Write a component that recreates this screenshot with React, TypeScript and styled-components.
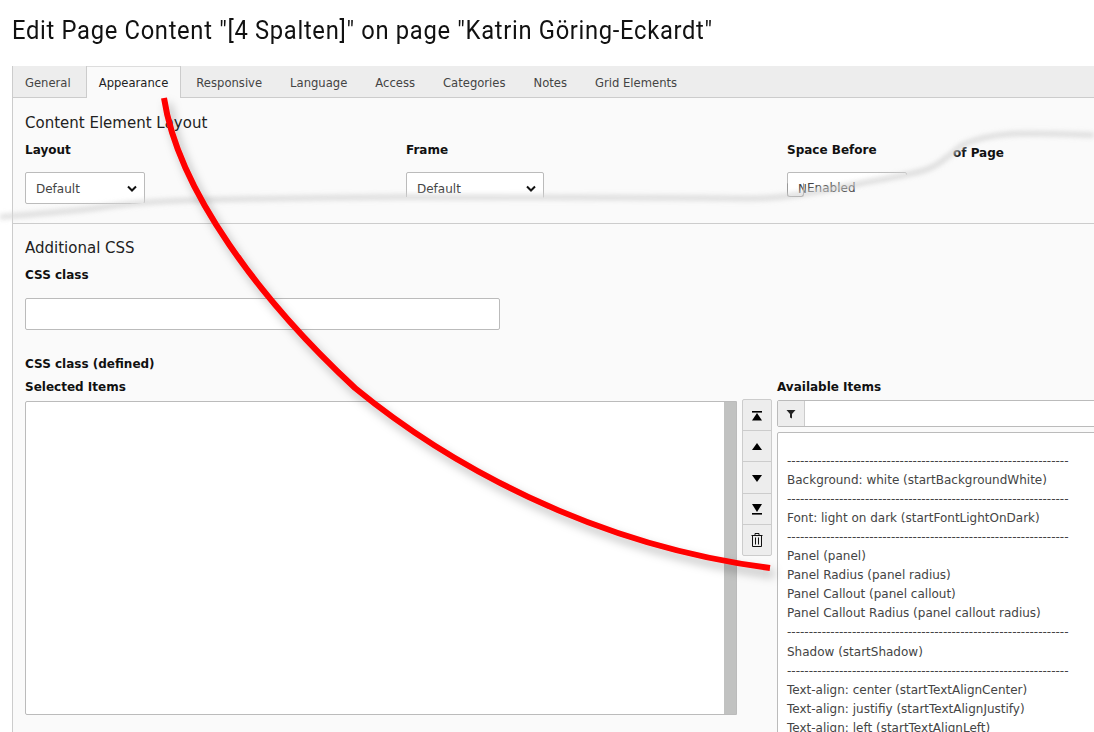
import React from "react";
import styled, { createGlobalStyle } from "styled-components";

const tabs = ["General", "Appearance", "Responsive", "Language", "Access", "Categories", "Notes", "Grid Elements"];

const DASHES = "-".repeat(65);
const available = [
  "",
  DASHES,
  "Background: white (startBackgroundWhite)",
  DASHES,
  "Font: light on dark (startFontLightOnDark)",
  DASHES,
  "Panel (panel)",
  "Panel Radius (panel radius)",
  "Panel Callout (panel callout)",
  "Panel Callout Radius (panel callout radius)",
  DASHES,
  "Shadow (startShadow)",
  DASHES,
  "Text-align: center (startTextAlignCenter)",
  "Text-align: justifiy (startTextAlignJustify)",
  "Text-align: left (startTextAlignLeft)",
];

type Pt = [number, number];

const RED_LINE = "M164 98 C178 190 260 300 355 388 C445 462 590 545 770 568";

const tearPts: Pt[] = [
  [0, 217], [80, 210], [130, 204], [200, 200], [400, 197], [700, 198], [780, 197],
  [867, 182], [925, 170], [950, 155], [967, 143], [1010, 134], [1094, 135],
];

// catmull-rom through the points, good enough for hand drawn marks
const smooth = (pts: Pt[]) => {
  let d = `M${pts[0][0]} ${pts[0][1]}`;
  for (let i = 0; i < pts.length - 1; i++) {
    const a = pts[Math.max(i - 1, 0)];
    const b = pts[i];
    const c = pts[i + 1];
    const e = pts[Math.min(i + 2, pts.length - 1)];
    d += ` C${b[0] + (c[0] - a[0]) / 6} ${b[1] + (c[1] - a[1]) / 6} ${c[0] - (e[0] - b[0]) / 6} ${c[1] - (e[1] - b[1]) / 6} ${c[0]} ${c[1]}`;
  }
  return d;
};

const GlobalStyle = createGlobalStyle`
  html, body {
    margin: 0;
    height: 732px;
    overflow: hidden;
    background: #fff;
  }
  * {
    box-sizing: border-box;
  }
`;

const Page = styled.div`
  position: relative;
  width: 1094px;
  height: 732px;
  overflow: hidden;
  padding: 0 0 0 12px;
  font-family: "DejaVu Sans", Verdana, sans-serif;
  font-size: 12px;
  color: #333;
`;

const Title = styled.h1`
  margin: 0;
  height: 66px;
  padding-top: 14px;
  font-family: Roboto, sans-serif;
  font-size: 26px;
  line-height: 32px;
  font-weight: 400;
  letter-spacing: 0.75px;
  color: #111;
  white-space: nowrap;
  transform: scaleX(0.913);
  transform-origin: left center;
`;

const Panel = styled.div`
  width: 1100px;
  height: 700px;
  background: #fafafa;
  border-left: 1px solid #ccc;
`;

const TabBar = styled.div`
  display: flex;
  height: 32px;
  background: #ededed;
  border-bottom: 1px solid #ccc;
`;

const Tab = styled.div<{ $active?: boolean }>`
  height: ${(p) => (p.$active ? "32px" : "31px")};
  margin: ${(p) => (p.$active ? "0 1px" : "0")};
  padding: ${(p) => (p.$active ? "0 12px" : "0 13px")};
  font-size: 11.6px;
  line-height: 34px;
  border: 1px solid ${(p) => (p.$active ? "#ccc" : "transparent")};
  border-bottom: 0;
  border-top: 0;
  background: ${(p) => (p.$active ? "#fafafa" : "transparent")};
  box-shadow: ${(p) => (p.$active ? "inset 0 1px 0 #ddd" : "none")};
  color: ${(p) => (p.$active ? "#222" : "#444")};

  &:first-child {
    padding-left: 11px;
  }
`;

const Section = styled.section<{ $divider?: boolean }>`
  padding: ${(p) => (p.$divider ? "15px" : "14px")} 0 0 12px;
  height: ${(p) => (p.$divider ? "126px" : "auto")};
  border-bottom: ${(p) => (p.$divider ? "1px solid #ccc" : "0")};
`;

const Heading = styled.h4`
  margin: 0 0 10px;
  font-size: 15px;
  line-height: 20px;
  font-weight: 400;
  color: #222;
`;

const FieldGrid = styled.div`
  display: grid;
  grid-template-columns: 381px 381px 200px;
`;

const Label = styled.div`
  font-size: 12px;
  line-height: 15px;
  font-weight: 700;
  color: #111;
  white-space: nowrap;
`;

const SelectBox = styled.div<{ $w: number }>`
  display: flex;
  align-items: center;
  justify-content: space-between;
  width: ${(p) => p.$w}px;
  height: 32px;
  margin-top: 14px;
  padding: 1px 7px 0 10px;
  background: #fff;
  border: 1px solid #bbb;
  border-radius: 2px;
  color: #444;
`;

const TextInput = styled.div`
  width: 475px;
  height: 32px;
  margin-top: 15px;
  background: #fff;
  border: 1px solid #bbb;
  border-radius: 2px;
`;

const DefinedLabel = styled(Label)`
  margin-top: 27px;
`;

const ListRow = styled.div`
  display: flex;
  margin-top: 8px;
`;

const SelectedCol = styled.div`
  width: 712px;
`;

const SelectedBox = styled.div`
  display: flex;
  justify-content: flex-end;
  height: 314px;
  margin-top: 6px;
  background: #fff;
  border: 1px solid #bbb;
  border-radius: 2px 0 0 2px;
`;

const ScrollTrack = styled.div`
  width: 12px;
  background: #c1c2c1;
`;

const ButtonStack = styled.div`
  display: flex;
  flex-direction: column;
  width: 30px;
  height: 157px;
  margin: 19px 0 0 5px;
  border: 1px solid #ccc;
  border-radius: 2px;
  background: #ededed;
`;

const StackButton = styled.div`
  display: flex;
  flex: 1;
  align-items: center;
  justify-content: center;
  border-bottom: 1px solid #ccc;
  color: #000;

  &:last-child {
    border-bottom: 0;
  }
`;

const AvailableCol = styled.div`
  width: 330px;
  margin-left: 5px;
`;

const FilterRow = styled.div`
  display: flex;
  height: 27px;
  margin-top: 5px;
  background: #fff;
  border: 1px solid #bbb;
  border-radius: 2px;
`;

const FilterIcon = styled.div`
  display: flex;
  align-items: center;
  justify-content: center;
  width: 27px;
  background: #ededed;
  border-right: 1px solid #ccc;
`;

const OptionList = styled.div`
  height: 320px;
  margin-top: 5px;
  padding: 0 9px;
  overflow: hidden;
  background: #fff;
  border: 1px solid #bbb;
  border-radius: 2px;
`;

const Option = styled.div`
  height: 19.05px;
  line-height: 19px;
  color: #444;
  white-space: nowrap;
`;

const Sheet = styled.svg`
  position: absolute;
  left: 0;
  top: 0;
  width: 1094px;
  height: 732px;
  pointer-events: none;
`;

const StrayLabel = styled(Label)`
  position: absolute;
  left: 953px;
  top: 146px;
`;

const StrayText = styled.div`
  position: absolute;
  left: 807px;
  top: 181px;
  line-height: 15px;
  color: #444;
`;

const StrayCheck = styled.div`
  position: absolute;
  left: 787px;
  top: 183px;
  width: 17px;
  height: 14px;
  background: transparent;
  border: 1px solid #999;
  border-top-color: transparent;
  border-radius: 0 0 3px 3px;
`;

const Chevron = () => (
  <svg width="10" height="8" viewBox="0 0 10 8">
    <path d="M1 1.5 5 5.5 9 1.5" fill="none" stroke="#111" strokeWidth="2" />
  </svg>
);

const ToTop = () => (
  <svg width="14" height="14" viewBox="0 0 14 14">
    <rect x="2" y="3" width="10" height="1.6" fill="#000" />
    <path d="M7 5 12 12.5H2Z" fill="#000" />
  </svg>
);

const Up = () => (
  <svg width="14" height="14" viewBox="0 0 14 14">
    <path d="M7 4 12 11H2Z" fill="#000" />
  </svg>
);

const Down = () => (
  <svg width="14" height="14" viewBox="0 0 14 14">
    <path d="M2 4H12L7 11Z" fill="#000" />
  </svg>
);

const ToBottom = () => (
  <svg width="14" height="14" viewBox="0 0 14 14">
    <path d="M2 2H12L7 10Z" fill="#000" />
    <rect x="2" y="11" width="10" height="1.6" fill="#000" />
  </svg>
);

const Trash = () => (
  <svg width="14" height="16" viewBox="0 0 14 16" fill="none" stroke="#111" strokeWidth="1">
    <path d="M1.5 3.5H12.5M5 3.5V1.5H9V3.5M2.5 3.5V14.5H11.5V3.5M5.5 5.5V12.5M8.5 5.5V12.5" />
  </svg>
);

const Funnel = () => (
  <svg width="10" height="10" viewBox="0 0 10 10">
    <path d="M0.5 1H9.5L6 5V9.5L4 8.5V5Z" fill="#222" />
  </svg>
);

export default function App() {
  const tear = smooth(tearPts);
  return (
    <Page>
      <GlobalStyle />
      <Title>Edit Page Content "[4 Spalten]" on page "Katrin Göring-Eckardt"</Title>
      <Panel>
        <TabBar>
          {tabs.map((t) => (
            <Tab key={t} $active={t === "Appearance"}>
              {t}
            </Tab>
          ))}
        </TabBar>

        <Section $divider>
          <Heading>Content Element Layout</Heading>
          <FieldGrid>
            <div>
              <Label>Layout</Label>
              <SelectBox $w={120}>
                Default
                <Chevron />
              </SelectBox>
            </div>
            <div>
              <Label>Frame</Label>
              <SelectBox $w={138}>
                Default
                <Chevron />
              </SelectBox>
            </div>
            <div>
              <Label>Space Before</Label>
              <SelectBox $w={120}>
                N
                <Chevron />
              </SelectBox>
            </div>
          </FieldGrid>
        </Section>

        <Section>
          <Heading>Additional CSS</Heading>
          <Label>CSS class</Label>
          <TextInput />
          <DefinedLabel>CSS class (defined)</DefinedLabel>
          <ListRow>
            <SelectedCol>
              <Label>Selected Items</Label>
              <SelectedBox>
                <ScrollTrack />
              </SelectedBox>
            </SelectedCol>
            <ButtonStack>
              <StackButton>
                <ToTop />
              </StackButton>
              <StackButton>
                <Up />
              </StackButton>
              <StackButton>
                <Down />
              </StackButton>
              <StackButton>
                <ToBottom />
              </StackButton>
              <StackButton>
                <Trash />
              </StackButton>
            </ButtonStack>
            <AvailableCol>
              <Label>Available Items</Label>
              <FilterRow>
                <FilterIcon>
                  <Funnel />
                </FilterIcon>
              </FilterRow>
              <OptionList>
                {available.map((o, i) => (
                  <Option key={i}>{o}</Option>
                ))}
              </OptionList>
            </AvailableCol>
          </ListRow>
        </Section>
      </Panel>

      {/* torn screenshot: the lower half of the first row is blanked out */}
      <Sheet viewBox="0 0 1094 732">
        <path d={`${smooth(tearPts.slice(2))} L1094 222 L130 222 Z`} fill="#fafafa" />
      </Sheet>
      <StrayLabel>of Page</StrayLabel>
      <StrayText>Enabled</StrayText>
      <StrayCheck />
      <Sheet viewBox="0 0 1094 732">
        <defs>
          <filter id="soft" x="-5%" y="-20%" width="110%" height="140%">
            <feGaussianBlur stdDeviation="2.4" />
          </filter>
          <filter id="inkShadow" x="-10%" y="-10%" width="120%" height="120%">
            <feDropShadow dx="4" dy="6" stdDeviation="5" floodColor="#000" floodOpacity="0.28" />
          </filter>
        </defs>
        <path d={tear} fill="none" stroke="#d6d6d6" strokeWidth="5" opacity="0.85" filter="url(#soft)" />
        <path d={RED_LINE} fill="none" stroke="#f00" strokeWidth="6" filter="url(#inkShadow)" />
      </Sheet>
    </Page>
  );
}
